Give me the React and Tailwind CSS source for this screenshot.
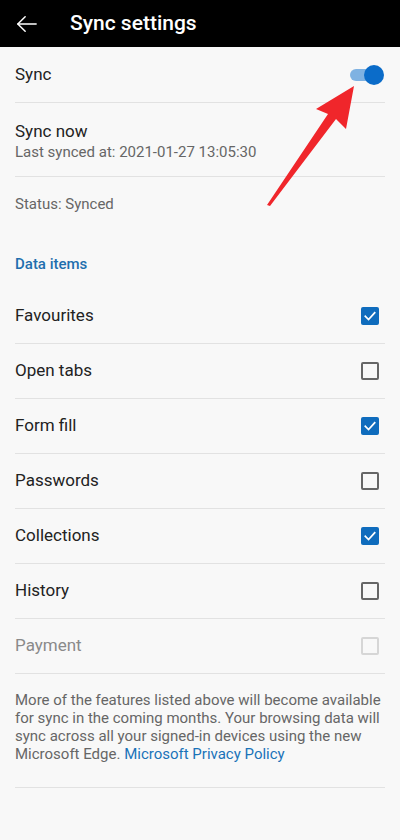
import { useState } from "react";

const ITEMS = [
  { label: "Favourites", checked: true },
  { label: "Open tabs", checked: false },
  { label: "Form fill", checked: true },
  { label: "Passwords", checked: false },
  { label: "Collections", checked: true },
  { label: "History", checked: false },
  { label: "Payment", checked: false, disabled: true },
];

function Checkbox({ checked, disabled }) {
  if (checked) {
    return (
      <div className="w-[18px] h-[18px] rounded-[2px] bg-[#0f6cbd] flex items-center justify-center">
        <svg width="14" height="14" viewBox="0 0 24 24" fill="none" stroke="white" strokeWidth="3" strokeLinecap="square">
          <polyline points="4 12.5 9.5 18 20 6.5" />
        </svg>
      </div>
    );
  }
  return (
    <div
      className={`w-[18px] h-[18px] rounded-[2px] border-2 ${
        disabled ? "border-[#d6d6d6]" : "border-[#666666]"
      }`}
    />
  );
}

export default function App() {
  const [items, setItems] = useState(ITEMS);

  function toggle(i) {
    if (items[i].disabled) return;
    setItems(items.map((it, j) => (j === i ? { ...it, checked: !it.checked } : it)));
  }

  return (
    <div className="relative w-[400px] h-[840px] bg-[#f8f8f8] font-['Roboto',sans-serif] overflow-hidden">
      {/* Top bar */}
      <div className="h-[47px] bg-black flex items-center">
        <svg className="ml-[16px]" width="22" height="22" viewBox="0 0 24 24" fill="none" stroke="white" strokeWidth="1.6" strokeLinecap="round" strokeLinejoin="round">
          <line x1="22" y1="12" x2="2" y2="12" />
          <polyline points="10 4 2 12 10 20" />
        </svg>
        <span className="ml-[32px] text-white text-[21px] font-medium">Sync settings</span>
      </div>

      {/* Sync toggle */}
      <div className="h-[55px] px-[15px] flex items-center justify-between">
        <span className="text-[17px] text-[#222]">Sync</span>
        <div className="relative w-[34px] h-[20px] mr-[1px]">
          <div className="absolute left-0 right-[2px] top-[4px] h-[12px] rounded-full bg-[#7fb2e2]" />
          <div className="absolute right-0 top-0 w-[20px] h-[20px] rounded-full bg-[#0b6cc9]" />
        </div>
      </div>
      <div className="mx-[15px] h-px bg-[#e2e2e2]" />

      {/* Sync now */}
      <div className="px-[15px] pt-[17px] pb-[14px]">
        <div className="text-[17px] leading-[22px] text-[#222]">Sync now</div>
        <div className="text-[15px] leading-[20px] text-[#666]">Last synced at: 2021-01-27 13:05:30</div>
      </div>
      <div className="mx-[15px] h-px bg-[#e2e2e2]" />

      {/* Status */}
      <div className="px-[15px] pt-[17px] text-[15px] leading-[20px] text-[#666]">Status: Synced</div>

      <div className="px-[15px] mt-[40px] text-[15px] leading-[20px] text-[#1f6fae] font-medium">Data items</div>

      <div className="mt-[15px]">
        {items.map((it, i) => (
          <div
            key={it.label}
            onClick={() => toggle(i)}
            className="mx-[15px] h-[55px] border-b border-[#e2e2e2] flex items-center justify-between"
          >
            <span className={`text-[17px] ${it.disabled ? "text-[#8a8a8a]" : "text-[#222]"}`}>{it.label}</span>
            <div className="mr-[6px]">
              <Checkbox checked={it.checked} disabled={it.disabled} />
            </div>
          </div>
        ))}
      </div>

      {/* Footer text */}
      <div className="mx-[15px] pt-[17px] pb-[24px] border-b border-[#e2e2e2] text-[15px] leading-[18px] text-[#666]">
        More of the features listed above will become available for sync in the coming months. Your browsing data will sync across all your signed-in devices using the new Microsoft Edge.{" "}
        <span className="text-[#1a73b8]">Microsoft Privacy Policy</span>
      </div>

      {/* Annotation arrow */}
      <svg className="absolute left-0 top-0 pointer-events-none" width="400" height="840" viewBox="0 0 400 840">
        <polygon
          points="267,205 328,114 316,109 354,86 346,129 336,119 270,206"
          fill="#f0262b"
        />
      </svg>
    </div>
  );
}
